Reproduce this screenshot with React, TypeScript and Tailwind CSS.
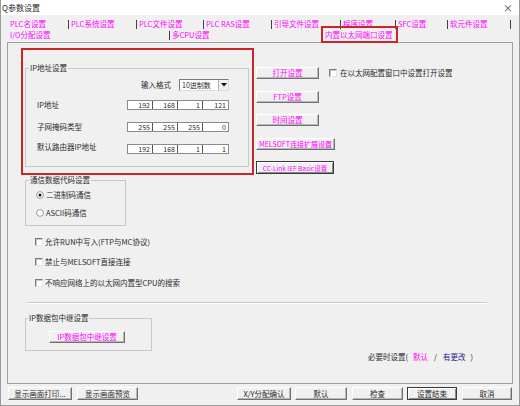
import React from 'react';

type BtnProps = {
  children: React.ReactNode;
  className?: string;
  focus?: boolean;
  magenta?: boolean;
};

const Btn = ({ children, className = '', focus = false, magenta = false }: BtnProps) => (
  <div
    className={`flex items-center justify-center whitespace-nowrap bg-[#f0f0f0] border ${
      focus
        ? 'border-[#3a3a3a] shadow-[inset_1px_1px_0_#ffffff,inset_-1px_-1px_0_#8a8a8a]'
        : 'border-t-white border-l-white border-r-[#707070] border-b-[#707070] shadow-[inset_-1px_-1px_0_#b8b8b8]'
    } ${magenta ? 'text-[#ff00ff]' : 'text-[#2a2a2a]'} ${className}`}
  >
    {children}
  </div>
);

const Check = () => (
  <div className="w-[8px] h-[8px] shrink-0 bg-white border border-t-[#7a7a7a] border-l-[#7a7a7a] border-r-[#e4e4e4] border-b-[#e4e4e4] shadow-[inset_1px_1px_0_#c8c8c8]" />
);

const Radio = ({ on = false }: { on?: boolean }) => (
  <svg width="8" height="8" viewBox="0 0 8 8" className="shrink-0">
    <circle cx="4" cy="4" r="3.4" fill="#ffffff" stroke="#8c8c8c" strokeWidth="0.9" />
    {on && <circle cx="4" cy="4" r="1.5" fill="#111111" />}
  </svg>
);

const IpBox = ({ values }: { values: string[] }) => (
  <div className="flex h-[10px] border border-[#8a8a8a] bg-white">
    {values.map((v, i) => (
      <div
        key={i}
        className={`w-[25px] text-right pr-[2px] text-[7px] leading-[8px] ${i < 3 ? 'border-r border-r-[#555555]' : ''}`}
      >
        {v}
      </div>
    ))}
  </div>
);

const Tab = ({ children, className = '' }: { children: React.ReactNode; className?: string }) => (
  <div className={`flex items-center ${className}`}>
    <span className="w-px h-[9px] bg-[#404040]" />
    <span className="ml-[2px] whitespace-nowrap">{children}</span>
  </div>
);

export default function App() {
  return (
    <div className="w-[520px] h-[406px] overflow-hidden bg-[#f0f0f0] border-l border-r border-b border-[#9a9a9a] text-[7.5px] leading-[10px] text-[#2a2a2a] font-['Noto_Sans_CJK_SC',sans-serif]">
      {/* title bar */}
      <div className="h-[15px] bg-white flex items-center justify-between pl-[1px] pr-[6px]">
        <span className="text-[8px]">Q参数设置</span>
        <span className="text-[10px] text-[#444]">×</span>
      </div>

      {/* tabs */}
      <div className="h-[27px] pt-[4px] text-[#ff00ff]">
        <div className="flex h-[10px] ml-[9px]">
          <div className="w-[58px] flex items-center">PLC名设置</div>
          <Tab className="w-[68px]">PLC系统设置</Tab>
          <Tab className="w-[67px]">PLC文件设置</Tab>
          <Tab className="w-[68px]">PLC RAS设置</Tab>
          <Tab className="w-[69px]">引导文件设置</Tab>
          <Tab className="w-[55px]">程序设置</Tab>
          <Tab className="w-[52px]">SFC设置</Tab>
          <Tab className="w-[63px]">软元件设置</Tab>
          <Tab className="w-[4px]">{''}</Tab>
        </div>
        <div className="flex h-[10px] mt-[1px] ml-[9px]">
          <div className="w-[159px] flex items-center">I/O分配设置</div>
          <Tab className="w-[156px]">多CPU设置</Tab>
          <div className="relative flex items-center">
            <span>内置以太网端口设置</span>
            <div className="absolute left-[-4px] top-[-4px] w-[77px] h-[17px] border-2 border-[#c9252b]" />
          </div>
        </div>
      </div>

      {/* panel */}
      <div className="ml-[6px] w-[506px] h-[342px] border border-[#a0a0a0] flex flex-col">
        <div className="flex items-start mt-[5px] ml-[13px]">
          <div className="w-[233px] h-[127px] border-2 border-[#c9252b]">
            <fieldset className="ml-[2px] mt-[13px] w-[224px] h-[104px] border border-[#c8c8c8]">
              <legend className="ml-[3px] px-[1px] leading-[10px]">IP地址设置</legend>
              <div className="flex items-center mt-[6px] h-[12px]">
                <div className="w-[115px]" />
                <div className="w-[38px]">输入格式</div>
                <div className="w-[50px] h-[12px] flex bg-white border border-t-[#7a7a7a] border-l-[#7a7a7a] border-r-[#dcdcdc] border-b-[#dcdcdc]">
                  <span className="flex-1 pl-[2px] text-[7px] leading-[10px]">10进制数</span>
                  <span className="w-[10px] flex items-center justify-center bg-[#f0f0f0] border-l border-[#b0b0b0]">
                    <svg width="6" height="4" viewBox="0 0 6 4">
                      <path d="M0 0h6L3 3.5z" fill="#111" />
                    </svg>
                  </span>
                </div>
              </div>
              <div className="flex items-center mt-[9px] h-[10px]">
                <div className="ml-[11px] w-[90px]">IP地址</div>
                <IpBox values={['192', '168', '1', '121']} />
              </div>
              <div className="flex items-center mt-[12px] h-[10px]">
                <div className="ml-[11px] w-[90px]">子网掩码类型</div>
                <IpBox values={['255', '255', '255', '0']} />
              </div>
              <div className="flex items-center mt-[12px] h-[10px]">
                <div className="ml-[11px] w-[90px] pb-[5px]">默认路由器IP地址</div>
                <IpBox values={['192', '168', '1', '1']} />
              </div>
            </fieldset>
          </div>

          <div className="ml-[2px] mt-[19px] flex flex-col">
            <div className="flex items-center">
              <Btn magenta className="w-[63px] h-[12px]">打开设置</Btn>
              <div className="ml-[10px]">
                <Check />
              </div>
              <span className="ml-[3px] whitespace-nowrap">在以太网配置窗口中设置打开设置</span>
            </div>
            <Btn magenta className="mt-[12px] w-[63px] h-[12px]">FTP设置</Btn>
            <Btn magenta className="mt-[11px] w-[63px] h-[12px]">时间设置</Btn>
            <Btn magenta className="mt-[12px] w-[79px] h-[12px] text-[7px]">MELSOFT连接扩展设置</Btn>
            <Btn magenta focus className="mt-[11px] w-[78px] h-[13px] text-[6.5px]">CC-Link IEF Basic设置</Btn>
          </div>
        </div>

        <fieldset className="ml-[17px] w-[101px] h-[51px] border border-[#c8c8c8]">
          <legend className="ml-[3px] px-[1px] leading-[10px]">通信数据代码设置</legend>
          <div className="flex items-center mt-[5px] ml-[10px] h-[10px]">
            <Radio on />
            <span className="ml-[2px]">二进制码通信</span>
          </div>
          <div className="flex items-center mt-[8px] ml-[10px] h-[10px]">
            <Radio />
            <span className="ml-[2px]">ASCII码通信</span>
          </div>
        </fieldset>

        <div className="flex items-center mt-[11px] ml-[27px] h-[10px]">
          <Check />
          <span className="ml-[2px]">允许RUN中写入(FTP与MC协议)</span>
        </div>
        <div className="flex items-center mt-[10px] ml-[27px] h-[10px]">
          <Check />
          <span className="ml-[2px]">禁止与MELSOFT直接连接</span>
        </div>
        <div className="flex items-center mt-[11px] ml-[27px] h-[10px]">
          <Check />
          <span className="ml-[2px]">不响应网络上的以太网内置型CPU的搜索</span>
        </div>

        <div className="mt-[14px] ml-[19px] w-[460px] h-[2px] border-t border-[#c8c8c8] border-b border-b-white" />

        <fieldset className="mt-[9px] ml-[17px] w-[127px] h-[38px] border border-[#c8c8c8]">
          <legend className="ml-[2px] px-[1px] leading-[10px]">IP数据包中继设置</legend>
          <Btn magenta className="mt-[8px] ml-[23px] w-[76px] h-[12px]">IP数据包中继设置</Btn>
        </fieldset>

        <div className="mt-[1px] ml-[360px] h-[10px] flex whitespace-nowrap">
          <span>必要时设置(</span>
          <span className="ml-[5px] text-[#ff00ff]">默认</span>
          <span className="ml-[6px]">/</span>
          <span className="ml-[6px] text-[#1c1c8c]">有更改</span>
          <span className="ml-[5px]">)</span>
        </div>
      </div>

      {/* bottom buttons */}
      <div className="flex mt-[3px] ml-[7px] h-[13px]">
        <Btn className="w-[64px] h-[13px]">显示画面打印...</Btn>
        <Btn className="ml-[5px] w-[61px] h-[13px]">显示画面预览</Btn>
        <Btn className="ml-[99px] w-[54px] h-[13px]">X/Y分配确认</Btn>
        <Btn className="ml-[4px] w-[52px] h-[13px]">默认</Btn>
        <Btn className="ml-[5px] w-[51px] h-[13px]">检查</Btn>
        <Btn focus className="ml-[4px] w-[50px] h-[13px]">设置结束</Btn>
        <Btn className="ml-[5px] w-[50px] h-[13px]">取消</Btn>
      </div>
    </div>
  );
}
